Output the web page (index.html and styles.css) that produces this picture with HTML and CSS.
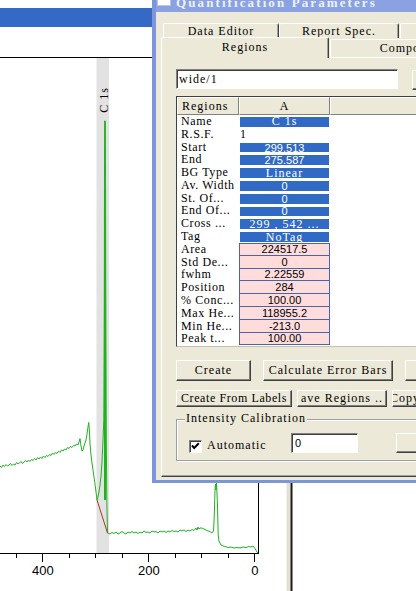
FILE: index.html
```html
<!DOCTYPE html>
<html>
<head>
<meta charset="utf-8">
<title>Quantification Parameters</title>
<link rel="stylesheet" href="styles.css">
</head>
<body>
<div class="screen">
  <div class="mainwin">
    <div class="topgap"></div>
    <div class="band"></div>
    <div class="midgap"></div>
    <svg class="plot" viewBox="0 57 416 534" width="416" height="534">
      <line x1="0" y1="57.5" x2="259" y2="57.5" stroke="#000" stroke-width="1"/>
      <rect x="96.5" y="58" width="12.5" height="495" fill="#e2e2e2"/>
      <text class="peaklabel" transform="translate(108,100) rotate(-90)" text-anchor="middle">C 1s</text>
      <path fill="none" stroke="#22b022" stroke-width="1" stroke-linejoin="round" d="M0,466 L1.5,467.5 L3,465 L4.5,466.5 L6,464.5 L7.5,466 L9,465 L10.5,463.5 L12,465.5 L13.5,464 L15,465 L16.5,462.5 L18,464 L19.5,463 L21,461.5 L22.5,463.5 L24,462 L25.5,460.5 L27,462 L28.5,460 L30,461.5 L31.5,459.5 L33,460.5 L34.5,458.5 L36,460 L37.5,457.5 L39,459 L40.5,457 L42,458.5 L43.5,456 L45,457.5 L46.5,455.5 L48,456.5 L49.5,454.5 L51,455.5 L52.5,453 L54,454.5 L55.5,452.5 L57,453.5 L58.5,451 L60,452.5 L61.5,450 L63,451 L64.5,449 L66,450 L67.5,447.5 L69,448.5 L70.5,446.5 L72,447.5 L73.5,445.5 L75,446 L76.5,444 L78,445 L79,442 L80,438.5 L81,446 L82,451 L83,450 L84,446 L85,443 L86,440 L87,434 L88,427 L88.7,422.5 L89.4,430 L90,444 L91,455 L92,463 L93,470 L94,477 L95,484 L96,492 L97,500 L98,497 L99,492 L100,485 L101,476 L102,462 L103,440 L103.8,420 L104.3,300 L104.6,121 L105.4,121 L105.8,300 L106.3,440 L106.8,500 L107.5,533 L110,534 L112,532.5 L114,533.5 L116,532 L118,534 L120,533 L122,531.5 L124,533 L126,534 L128,532 L130,533 L132,531.5 L134,533 L136,532 L138,533.5 L140,532 L142,533 L144,531 L146,532.5 L148,532 L150,533 L152,531 L154,532 L156,531.5 L158,533 L160,531 L162,532 L164,531 L166,532.5 L168,531 L170,532 L172,530.5 L174,531.5 L176,531 L178,532 L180,530 L182,531 L184,530 L186,531.5 L188,530 L190,531 L192,529.5 L194,530.5 L196,528 L197,530 L198,527 L199,529 L200,528 L202,528 L204,529 L206,530 L208,531 L210,531.5 L212,533 L213.5,531 L214.3,515 L215,490 L215.5,484 L216,490 L216.5,482 L217,494 L217.5,506 L218.2,535 L219,541 L221,545 L223,546 L225,546.5 L228,547.5 L231,547 L234,548 L237,547.5 L240,548 L243,547 L246,547.5 L249,546.5 L251,547 L253,546 L255,548.5 L257,552 L258,553"/>
      <path fill="none" stroke="#22b022" stroke-width="1.2" d="M104.6,190 L104.6,500 M105.4,190 L105.4,500"/>
      <line x1="97" y1="500" x2="107.5" y2="533" stroke="#a33c1c" stroke-width="1"/>
      <line x1="258.5" y1="57" x2="258.5" y2="554" stroke="#000" stroke-width="1"/>
      <line x1="0" y1="553.5" x2="259" y2="553.5" stroke="#000" stroke-width="1"/>
      <g stroke="#000" stroke-width="1">
        <line x1="16.5" y1="553" x2="16.5" y2="558"/>
        <line x1="42.5" y1="553" x2="42.5" y2="562"/>
        <line x1="69.5" y1="553" x2="69.5" y2="558"/>
        <line x1="95.5" y1="553" x2="95.5" y2="558"/>
        <line x1="122.5" y1="553" x2="122.5" y2="558"/>
        <line x1="148.5" y1="553" x2="148.5" y2="562"/>
        <line x1="175.5" y1="553" x2="175.5" y2="558"/>
        <line x1="201.5" y1="553" x2="201.5" y2="558"/>
        <line x1="228.5" y1="553" x2="228.5" y2="558"/>
        <line x1="254.5" y1="553" x2="254.5" y2="562"/>
      </g>
      <text class="axlabel" x="42.8" y="575" text-anchor="middle">400</text>
      <text class="axlabel" x="148.8" y="575" text-anchor="middle">200</text>
      <text class="axlabel" x="254.8" y="575" text-anchor="middle">0</text>
      <rect x="286.5" y="483" width="4" height="108" fill="#e4e1d4"/>
      <rect x="290.5" y="483" width="2" height="108" fill="#1a1a1a"/>
    </svg>
  </div>

  <div class="dialog">
    <div class="titlebar">
      <span class="sysicon"></span>
      <span class="title">Quantification Parameters</span>
    </div>
    <div class="client">
      <div class="tabrow back">
        <div class="tab t-data">Data Editor</div>
        <div class="tab t-report">Report Spec.</div>
        <div class="tab t-third"></div>
      </div>
      <div class="tabrow front">
        <div class="tab t-regions">Regions</div>
        <div class="tab t-comp">Components</div>
      </div>
      <div class="panel">
        <div class="toprow">
          <div class="textbox">wide/1</div>
          <div class="btn sidebtn"></div>
        </div>
        <div class="grid">
          <div class="ghead">
            <div class="hc hc1">Regions</div>
            <div class="hc hc2">A</div>
            <div class="hc hc3"></div>
          </div>
          <div class="grow"><div class="lbl">Name</div><div class="val"><div class="bluecell">C 1s</div></div></div>
          <div class="grow"><div class="lbl">R.S.F.</div><div class="val plain">1</div></div>
          <div class="grow"><div class="lbl">Start</div><div class="val"><div class="bluecell num">299.513</div></div></div>
          <div class="grow"><div class="lbl">End</div><div class="val"><div class="bluecell num">275.587</div></div></div>
          <div class="grow"><div class="lbl">BG Type</div><div class="val"><div class="bluecell">Linear</div></div></div>
          <div class="grow"><div class="lbl">Av. Width</div><div class="val"><div class="bluecell num">0</div></div></div>
          <div class="grow"><div class="lbl">St. Of...</div><div class="val"><div class="bluecell num">0</div></div></div>
          <div class="grow"><div class="lbl">End Of...</div><div class="val"><div class="bluecell num">0</div></div></div>
          <div class="grow"><div class="lbl">Cross ...</div><div class="val"><div class="bluecell">299 , 542 ...</div></div></div>
          <div class="grow"><div class="lbl">Tag</div><div class="val"><div class="bluecell">NoTag</div></div></div>
          <div class="grow"><div class="lbl">Area</div><div class="val pink first num">224517.5</div></div>
          <div class="grow"><div class="lbl">Std De...</div><div class="val pink num">0</div></div>
          <div class="grow"><div class="lbl">fwhm</div><div class="val pink num">2.22559</div></div>
          <div class="grow"><div class="lbl">Position</div><div class="val pink num">284</div></div>
          <div class="grow"><div class="lbl">% Conc...</div><div class="val pink num">100.00</div></div>
          <div class="grow"><div class="lbl">Max He...</div><div class="val pink num">118955.2</div></div>
          <div class="grow"><div class="lbl">Min He...</div><div class="val pink num">-213.0</div></div>
          <div class="grow"><div class="lbl">Peak t...</div><div class="val pink num">100.00</div></div>
        </div>
        <div class="btnrow row1">
          <div class="btn b-create">Create</div>
          <div class="btn b-calc">Calculate Error Bars</div>
          <div class="btn b-more"></div>
        </div>
        <div class="btnrow row2">
          <div class="btn b-labels">Create From Labels</div>
          <div class="btn b-save">ave Regions ..</div>
          <div class="btn b-copy"><span class="copytext">Copy</span></div>
        </div>
        <div class="group">
          <div class="legend">Intensity Calibration</div>
          <div class="grouprow">
            <div class="chk">
              <svg width="11" height="11" viewBox="0 0 11 11"><path d="M2,4.5 L4.2,7 L8.8,2.2" fill="none" stroke="#000" stroke-width="2"/></svg>
            </div>
            <div class="chklabel">Automatic</div>
            <div class="field num">0</div>
            <div class="btn gbtn"></div>
          </div>
        </div>
      </div>
    </div>
  </div>
</div>
</body>
</html>
```

FILE: styles.css
```css
* { box-sizing: border-box; }

body {
  margin: 0;
  background: #fff;
}

.screen {
  position: relative;
  width: 416px;
  height: 591px;
  overflow: hidden;
  background: #fff;
  font-family: "Liberation Serif", "Times New Roman", serif;
  font-size: 12px;
  letter-spacing: 1px;
  color: #000;
}

/* main window behind the dialog */
.mainwin {
  width: 416px;
  height: 591px;
}
.topgap { height: 8px; }
.band { height: 19px; background: #3469c6; }
.midgap { height: 30px; }
.plot { display: block; width: 416px; height: 534px; }

.peaklabel {
  font-family: "Liberation Serif", serif;
  font-size: 12px;
  letter-spacing: 1px;
  fill: #000;
}
.axlabel {
  font-family: "Liberation Sans", Arial, sans-serif;
  font-size: 13px;
  letter-spacing: 0;
  fill: #000;
}

/* dialog window */
.dialog {
  position: absolute;
  left: 152px;
  top: -10px;
  width: 420px;
  height: 493px;
  background: #ece9d8;
  border-left: 4px solid #7d95db;
  border-bottom: 3px solid #7d95db;
}

.titlebar {
  display: flex;
  align-items: flex-start;
  height: 22px;
  background: #8aa1e2;
  padding-left: 1px;
}
.sysicon {
  flex-shrink: 0;
  width: 14px;
  height: 16px;
  background: #fff;
  border: 1px solid #b9c6ea;
  border-top: 0;
}
.title {
  margin-left: 5px;
  margin-top: 6px;
  font-weight: bold;
  font-size: 13px;
  line-height: 13px;
  letter-spacing: 2.1px;
  color: #eef2fc;
  white-space: nowrap;
}

.client {
  height: 468px;
  padding-top: 11px;
}

/* tabs */
.tabrow { display: flex; }
.back { height: 15px; padding-left: 7px; }
.front { height: 19px; padding-left: 5px; align-items: flex-end; }

.tab {
  flex-shrink: 0;
  background: #ece9d8;
  border-top: 1px solid #fff;
  border-left: 1px solid #fff;
  border-right: 1px solid #404040;
  box-shadow: inset -1px 0 #a0a0a0;
  border-radius: 2px 2px 0 0;
  display: flex;
  justify-content: center;
  align-items: center;
  white-space: nowrap;
  overflow: hidden;
}
.back .tab { height: 15px; }
.t-data { width: 116px; }
.t-report { width: 120px; }
.t-third { width: 80px; margin-left: 1px; }
.t-regions {
  width: 168px;
  height: 21px;
  margin-bottom: -1px;
  padding-bottom: 2px;
  position: relative;
  z-index: 1;
}
.t-comp { width: 170px; height: 18px; margin-left: 1px; }

.panel {
  margin-left: 5px;
  height: 420px;
  border-top: 1px solid #fff;
  border-left: 1px solid #fff;
  border-bottom: 1px solid #404040;
  box-shadow: inset 0 -1px #a0a0a0;
  padding: 11px 0 0 14px;
}

.toprow { display: flex; height: 20px; }
.textbox {
  flex-shrink: 0;
  width: 222px;
  height: 20px;
  background: #fff;
  border: 1px solid;
  border-color: #808080 #fff #fff #808080;
  box-shadow: inset 1px 1px #404040;
  padding-left: 2px;
  display: flex;
  align-items: center;
}
.sidebtn { margin-left: 14px; margin-top: 1px; width: 40px; height: 20px; }

/* grid */
.grid {
  margin-top: 7px;
  height: 251px;
  background: #fff;
  border-top: 1px solid #404040;
  border-left: 1px solid #404040;
  border-bottom: 1px solid #c4c1b4;
}
.ghead { display: flex; height: 18px; }
.hc {
  flex-shrink: 0;
  background: #ece9d8;
  border-top: 1px solid #fff;
  border-left: 1px solid #fff;
  border-right: 1px solid #808080;
  border-bottom: 1px solid #808080;
  display: flex;
  align-items: center;
}
.hc1 { width: 62px; padding-left: 4px; }
.hc2 { width: 91px; justify-content: center; }
.hc3 { flex: 1; }

.grow { display: flex; height: 12.8px; }
.lbl {
  flex-shrink: 0;
  width: 62px;
  padding-left: 4px;
  display: flex;
  align-items: center;
  white-space: nowrap;
  overflow: hidden;
  letter-spacing: 0.6px;
}
.val {
  flex-shrink: 0;
  width: 91px;
  display: flex;
  align-items: stretch;
  white-space: nowrap;
}
.bluecell {
  flex: 1;
  margin: 2px 1px 1px;
  background: #316ac5;
  color: #fff;
  display: flex;
  align-items: center;
  justify-content: center;
}
.val.plain { align-items: center; padding-left: 1px; }
.val.pink {
  background: #ffdcdc;
  border-left: 1px solid #4a64a8;
  border-right: 1px solid #4a64a8;
  border-bottom: 1px solid #4a64a8;
  align-items: center;
  justify-content: center;
}
.val.pink.first { border-top: 1px solid #4a64a8; }

.num {
  font-family: "Liberation Sans", Arial, sans-serif;
  font-size: 11px;
  letter-spacing: 0;
}

/* buttons */
.btn {
  flex-shrink: 0;
  background: #ece9d8;
  border: 1px solid;
  border-color: #fff #404040 #404040 #fff;
  box-shadow: inset -1px -1px #808080;
  display: flex;
  align-items: center;
  justify-content: center;
  white-space: nowrap;
  overflow: hidden;
}
.btnrow { display: flex; }
.row1 { margin-top: 13px; height: 21px; gap: 12px; }
.row2 { margin-top: 9px; height: 17px; gap: 5px; }
.b-create { width: 75px; }
.b-calc { width: 130px; }
.b-more { width: 60px; }
.b-labels { width: 116px; letter-spacing: 0.6px; }
.b-save { width: 90px; }
.b-copy { width: 60px; justify-content: flex-start; }
.copytext { margin-left: -3px; }

/* group box */
.group {
  position: relative;
  margin-top: 12px;
  height: 42px;
  border: 1px solid #a0a0a0;
  box-shadow: inset 1px 1px #fff, 1px 1px #fff;
}
.legend {
  position: absolute;
  left: 8px;
  top: -8px;
  padding: 0 1px;
  line-height: 13px;
  background: #ece9d8;
  white-space: nowrap;
}
.grouprow {
  display: flex;
  align-items: flex-start;
  padding: 13px 0 0 12px;
}
.chk {
  flex-shrink: 0;
  width: 13px;
  height: 13px;
  margin-top: 7px;
  background: #fff;
  border: 1px solid;
  border-color: #808080 #fff #fff #808080;
  box-shadow: inset 1px 1px #404040;
}
.chk svg { display: block; }
.chklabel {
  flex-shrink: 0;
  width: 84px;
  margin-left: 5px;
  margin-top: 2px;
  height: 20px;
  display: flex;
  align-items: center;
}
.field {
  flex-shrink: 0;
  width: 67px;
  height: 20px;
  background: #fff;
  border: 1px solid;
  border-color: #808080 #fff #fff #808080;
  box-shadow: inset 1px 1px #404040;
  padding-left: 3px;
  display: flex;
  align-items: center;
}
.gbtn { margin-left: 38px; width: 60px; height: 20px; }
```
